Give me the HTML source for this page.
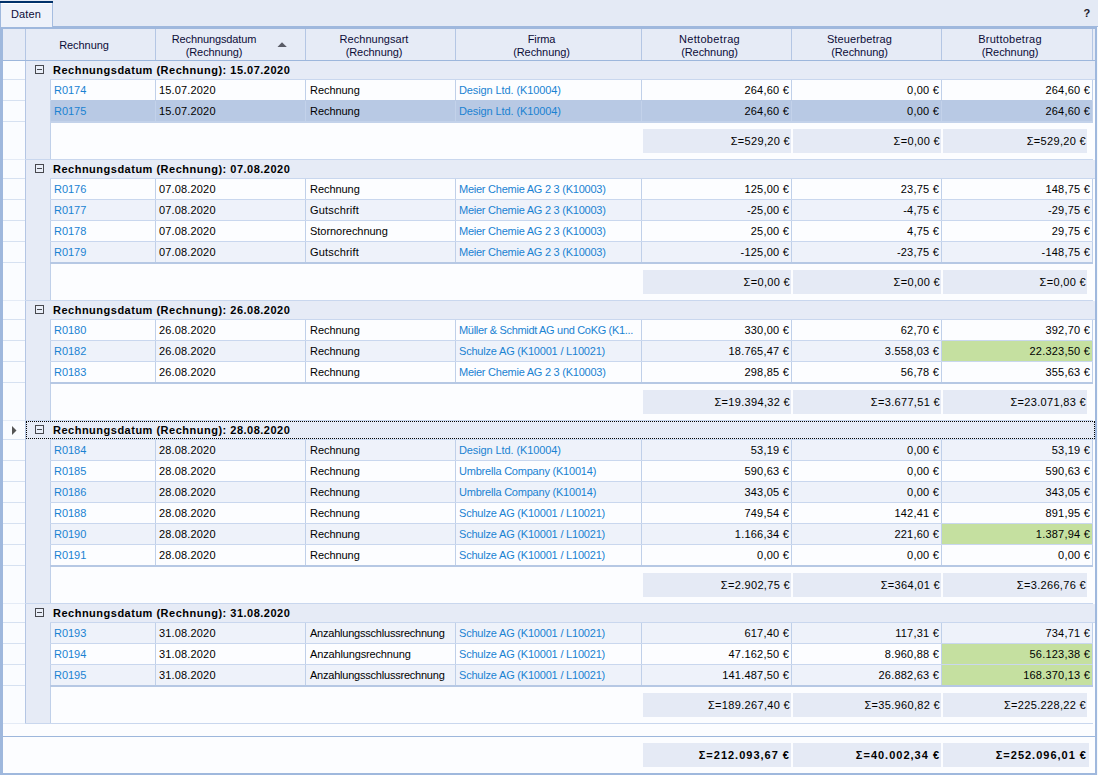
<!DOCTYPE html>
<html><head><meta charset="utf-8"><style>
html,body{margin:0;padding:0;width:1098px;height:775px;overflow:hidden;background:#f5f8fc;}
body{position:relative;font-family:"Liberation Sans", sans-serif;font-size:11px;}
div{position:absolute;box-sizing:content-box;}
.t,.n,.d,.s,.b,.tot,.tab{white-space:nowrap;line-height:20px;height:20px;}
.t{letter-spacing:-0.25px;}
.n{letter-spacing:0.22px;}
.d{letter-spacing:0.16px;}
.s{letter-spacing:0.33px;}
.b{letter-spacing:0.5px;}
.tot{letter-spacing:1.0px;}
</style></head><body>
<div style="left:0px;top:0px;width:1098px;height:27px;background:#e4eaf5;"></div>
<div style="left:0px;top:1px;width:53px;height:2px;background:#00316a;"></div>
<div style="left:0px;top:3px;width:53px;height:24px;background:#eef2fa;"></div>
<div style="left:0px;top:3px;width:1px;height:24px;background:#9fb8dd;"></div>
<div style="left:52px;top:3px;width:1px;height:24px;background:#a5bde0;"></div>
<div style="left:1px;top:3px;width:51px;height:1px;background:#ffffff;"></div>
<div class="tab" style="top:4px;color:#0c0c38;left:11px;letter-spacing:0.110px;">Daten</div>
<div class="t" style="top:3px;color:#1a1a2a;right:8px;text-align:right;font-weight:bold;">?</div>
<div style="left:53px;top:26px;width:1045px;height:1px;background:#9fb8dd;"></div>
<div style="left:0px;top:27px;width:1097px;height:2px;background:#9fb8dd;"></div>
<div style="left:0px;top:27px;width:3px;height:748px;background:#9fb8dd;"></div>
<div style="left:1095px;top:27px;width:2px;height:748px;background:#9fb8dd;"></div>
<div style="left:0px;top:773px;width:1097px;height:2px;background:#9fb8dd;"></div>
<div style="left:3px;top:29px;width:1092px;height:744px;background:#fcfdff;"></div>
<div style="left:3px;top:29px;width:1092px;height:31px;background:#e6ebf6;"></div>
<div style="left:3px;top:60px;width:1092px;height:1px;background:#9db7dc;"></div>
<div style="left:25px;top:29px;width:1px;height:31px;background:#b4c6e4;"></div>
<div style="left:155px;top:29px;width:1px;height:31px;background:#b4c6e4;"></div>
<div style="left:305px;top:29px;width:1px;height:31px;background:#b4c6e4;"></div>
<div style="left:455px;top:29px;width:1px;height:31px;background:#b4c6e4;"></div>
<div style="left:641px;top:29px;width:1px;height:31px;background:#b4c6e4;"></div>
<div style="left:791px;top:29px;width:1px;height:31px;background:#b4c6e4;"></div>
<div style="left:941px;top:29px;width:1px;height:31px;background:#b4c6e4;"></div>
<div style="left:1092px;top:29px;width:1px;height:31px;background:#b4c6e4;"></div>
<div class="t" style="top:35px;color:#0c0c38;left:-66px;width:300px;text-align:center;letter-spacing:-0.051px;">Rechnung</div>
<div class="t" style="top:29px;color:#0c0c38;left:64px;width:300px;text-align:center;letter-spacing:-0.110px;">Rechnungsdatum</div>
<div class="t" style="top:42px;color:#0c0c38;left:64px;width:300px;text-align:center;letter-spacing:-0.076px;">(Rechnung)</div>
<div class="t" style="top:29px;color:#0c0c38;left:224px;width:300px;text-align:center;letter-spacing:0.027px;">Rechnungsart</div>
<div class="t" style="top:42px;color:#0c0c38;left:224px;width:300px;text-align:center;letter-spacing:-0.076px;">(Rechnung)</div>
<div class="t" style="top:29px;color:#0c0c38;left:391.5px;width:300px;text-align:center;letter-spacing:-0.077px;">Firma</div>
<div class="t" style="top:42px;color:#0c0c38;left:391.5px;width:300px;text-align:center;letter-spacing:-0.076px;">(Rechnung)</div>
<div class="t" style="top:29px;color:#0c0c38;left:559.5px;width:300px;text-align:center;letter-spacing:0.332px;">Nettobetrag</div>
<div class="t" style="top:42px;color:#0c0c38;left:559.5px;width:300px;text-align:center;letter-spacing:-0.076px;">(Rechnung)</div>
<div class="t" style="top:29px;color:#0c0c38;left:709.5px;width:300px;text-align:center;letter-spacing:0.136px;">Steuerbetrag</div>
<div class="t" style="top:42px;color:#0c0c38;left:709.5px;width:300px;text-align:center;letter-spacing:-0.076px;">(Rechnung)</div>
<div class="t" style="top:29px;color:#0c0c38;left:860px;width:300px;text-align:center;letter-spacing:0.259px;">Bruttobetrag</div>
<div class="t" style="top:42px;color:#0c0c38;left:860px;width:300px;text-align:center;letter-spacing:-0.076px;">(Rechnung)</div>
<svg style="position:absolute;left:277px;top:42px" width="11" height="6"><path d="M0.5 5 L5 0.3 L9.8 5 Z" fill="#595b66"/></svg>
<div style="left:3px;top:61px;width:22px;height:662px;background:#fafcff;"></div>
<div style="left:25px;top:61px;width:1px;height:663px;background:#b4c6e4;"></div>
<div style="left:26px;top:61px;width:1069px;height:18px;background:#e6ebf6;"></div>
<div style="left:35px;top:65px;width:7px;height:7px;border:1px solid #47484e;background:#e9eef8"></div>
<div style="left:37px;top:69px;width:5px;height:1px;background:#47484e;"></div>
<div class="b" style="top:60px;color:#000000;left:53px;font-weight:bold;">Rechnungsdatum (Rechnung): 15.07.2020</div>
<div style="left:3px;top:79px;width:22px;height:1px;background:#d6e1f1;"></div>
<div style="left:26px;top:79px;width:24px;height:1px;background:#e6ebf6;"></div>
<div style="left:50px;top:79px;width:1045px;height:1px;background:#c9d7ee;"></div>
<div style="left:26px;top:80px;width:24px;height:80px;background:#e6ebf6;"></div>
<div style="left:50px;top:80px;width:1px;height:80px;background:#c0d0e9;"></div>
<div style="left:51px;top:80px;width:1041px;height:20px;background:#fcfdff;"></div>
<div style="left:155px;top:80px;width:1px;height:20px;background:#c0d0e9;"></div>
<div style="left:305px;top:80px;width:1px;height:20px;background:#c0d0e9;"></div>
<div style="left:455px;top:80px;width:1px;height:20px;background:#c0d0e9;"></div>
<div style="left:641px;top:80px;width:1px;height:20px;background:#c0d0e9;"></div>
<div style="left:791px;top:80px;width:1px;height:20px;background:#c0d0e9;"></div>
<div style="left:941px;top:80px;width:1px;height:20px;background:#c0d0e9;"></div>
<div style="left:1092px;top:80px;width:1px;height:20px;background:#c0d0e9;"></div>
<div style="left:3px;top:100px;width:22px;height:1px;background:#d6e1f1;"></div>
<div style="left:50px;top:100px;width:1043px;height:1px;background:#c9d7ee;"></div>
<div class="t" style="top:80px;color:#1a82d2;left:54px;letter-spacing:-0.030px;">R0174</div>
<div class="d" style="top:80px;color:#000000;left:159px;">15.07.2020</div>
<div class="t" style="top:80px;color:#000000;left:310px;letter-spacing:-0.051px;">Rechnung</div>
<div class="t" style="top:80px;color:#1a82d2;left:459px;letter-spacing:-0.103px;">Design Ltd. (K10004)</div>
<div class="n" style="top:80px;color:#000000;right:309px;text-align:right;">264,60 €</div>
<div class="n" style="top:80px;color:#000000;right:159px;text-align:right;">0,00 €</div>
<div class="n" style="top:80px;color:#000000;right:8px;text-align:right;">264,60 €</div>
<div style="left:51px;top:101px;width:1041px;height:20px;background:#b8c9e4;"></div>
<div style="left:51px;top:100px;width:1041px;height:1px;background:#b8c9e4;"></div>
<div style="left:155px;top:101px;width:1px;height:20px;background:#c3d2ea;"></div>
<div style="left:305px;top:101px;width:1px;height:20px;background:#c3d2ea;"></div>
<div style="left:455px;top:101px;width:1px;height:20px;background:#c3d2ea;"></div>
<div style="left:641px;top:101px;width:1px;height:20px;background:#c3d2ea;"></div>
<div style="left:791px;top:101px;width:1px;height:20px;background:#c3d2ea;"></div>
<div style="left:941px;top:101px;width:1px;height:20px;background:#c3d2ea;"></div>
<div style="left:1092px;top:101px;width:1px;height:20px;background:#c3d2ea;"></div>
<div style="left:3px;top:121px;width:22px;height:1px;background:#d6e1f1;"></div>
<div style="left:50px;top:121px;width:1043px;height:2px;background:#c3d2ea;"></div>
<div class="t" style="top:101px;color:#1a82d2;left:54px;letter-spacing:-0.030px;">R0175</div>
<div class="d" style="top:101px;color:#000000;left:159px;">15.07.2020</div>
<div class="t" style="top:101px;color:#000000;left:310px;letter-spacing:-0.051px;">Rechnung</div>
<div class="t" style="top:101px;color:#1a82d2;left:459px;letter-spacing:-0.103px;">Design Ltd. (K10004)</div>
<div class="n" style="top:101px;color:#000000;right:309px;text-align:right;">264,60 €</div>
<div class="n" style="top:101px;color:#000000;right:159px;text-align:right;">0,00 €</div>
<div class="n" style="top:101px;color:#000000;right:8px;text-align:right;">264,60 €</div>
<div style="left:51px;top:123px;width:1044px;height:36px;background:#fcfdff;"></div>
<div style="left:643px;top:129px;width:148px;height:24px;background:#e5eaf5;"></div>
<div style="left:793px;top:129px;width:148px;height:24px;background:#e5eaf5;"></div>
<div style="left:943px;top:129px;width:144px;height:24px;background:#e5eaf5;"></div>
<div class="s" style="top:131px;color:#000000;right:308px;text-align:right;">Σ=529,20 €</div>
<div class="s" style="top:131px;color:#000000;right:158px;text-align:right;">Σ=0,00 €</div>
<div class="s" style="top:131px;color:#000000;right:12px;text-align:right;">Σ=529,20 €</div>
<div style="left:3px;top:159px;width:22px;height:1px;background:#e4ebf6;"></div>
<div style="left:25px;top:159px;width:1068px;height:1px;background:#c9d7ee;"></div>
<div style="left:26px;top:160px;width:1069px;height:18px;background:#e6ebf6;"></div>
<div style="left:35px;top:164px;width:7px;height:7px;border:1px solid #47484e;background:#e9eef8"></div>
<div style="left:37px;top:168px;width:5px;height:1px;background:#47484e;"></div>
<div class="b" style="top:159px;color:#000000;left:53px;font-weight:bold;">Rechnungsdatum (Rechnung): 07.08.2020</div>
<div style="left:3px;top:178px;width:22px;height:1px;background:#d6e1f1;"></div>
<div style="left:26px;top:178px;width:24px;height:1px;background:#e6ebf6;"></div>
<div style="left:50px;top:178px;width:1045px;height:1px;background:#c9d7ee;"></div>
<div style="left:26px;top:179px;width:24px;height:122px;background:#e6ebf6;"></div>
<div style="left:50px;top:179px;width:1px;height:122px;background:#c0d0e9;"></div>
<div style="left:51px;top:179px;width:1041px;height:20px;background:#fcfdff;"></div>
<div style="left:155px;top:179px;width:1px;height:20px;background:#c0d0e9;"></div>
<div style="left:305px;top:179px;width:1px;height:20px;background:#c0d0e9;"></div>
<div style="left:455px;top:179px;width:1px;height:20px;background:#c0d0e9;"></div>
<div style="left:641px;top:179px;width:1px;height:20px;background:#c0d0e9;"></div>
<div style="left:791px;top:179px;width:1px;height:20px;background:#c0d0e9;"></div>
<div style="left:941px;top:179px;width:1px;height:20px;background:#c0d0e9;"></div>
<div style="left:1092px;top:179px;width:1px;height:20px;background:#c0d0e9;"></div>
<div style="left:3px;top:199px;width:22px;height:1px;background:#d6e1f1;"></div>
<div style="left:50px;top:199px;width:1043px;height:1px;background:#c9d7ee;"></div>
<div class="t" style="top:179px;color:#1a82d2;left:54px;letter-spacing:-0.030px;">R0176</div>
<div class="d" style="top:179px;color:#000000;left:159px;">07.08.2020</div>
<div class="t" style="top:179px;color:#000000;left:310px;letter-spacing:-0.051px;">Rechnung</div>
<div class="t" style="top:179px;color:#1a82d2;left:459px;letter-spacing:-0.247px;">Meier Chemie AG 2 3 (K10003)</div>
<div class="n" style="top:179px;color:#000000;right:309px;text-align:right;">125,00 €</div>
<div class="n" style="top:179px;color:#000000;right:159px;text-align:right;">23,75 €</div>
<div class="n" style="top:179px;color:#000000;right:8px;text-align:right;">148,75 €</div>
<div style="left:51px;top:200px;width:1041px;height:20px;background:#eef2fa;"></div>
<div style="left:155px;top:200px;width:1px;height:20px;background:#c0d0e9;"></div>
<div style="left:305px;top:200px;width:1px;height:20px;background:#c0d0e9;"></div>
<div style="left:455px;top:200px;width:1px;height:20px;background:#c0d0e9;"></div>
<div style="left:641px;top:200px;width:1px;height:20px;background:#c0d0e9;"></div>
<div style="left:791px;top:200px;width:1px;height:20px;background:#c0d0e9;"></div>
<div style="left:941px;top:200px;width:1px;height:20px;background:#c0d0e9;"></div>
<div style="left:1092px;top:200px;width:1px;height:20px;background:#c0d0e9;"></div>
<div style="left:3px;top:220px;width:22px;height:1px;background:#d6e1f1;"></div>
<div style="left:50px;top:220px;width:1043px;height:1px;background:#c9d7ee;"></div>
<div class="t" style="top:200px;color:#1a82d2;left:54px;letter-spacing:-0.030px;">R0177</div>
<div class="d" style="top:200px;color:#000000;left:159px;">07.08.2020</div>
<div class="t" style="top:200px;color:#000000;left:310px;letter-spacing:0.191px;">Gutschrift</div>
<div class="t" style="top:200px;color:#1a82d2;left:459px;letter-spacing:-0.247px;">Meier Chemie AG 2 3 (K10003)</div>
<div class="n" style="top:200px;color:#000000;right:309px;text-align:right;">-25,00 €</div>
<div class="n" style="top:200px;color:#000000;right:159px;text-align:right;">-4,75 €</div>
<div class="n" style="top:200px;color:#000000;right:8px;text-align:right;">-29,75 €</div>
<div style="left:51px;top:221px;width:1041px;height:20px;background:#fcfdff;"></div>
<div style="left:155px;top:221px;width:1px;height:20px;background:#c0d0e9;"></div>
<div style="left:305px;top:221px;width:1px;height:20px;background:#c0d0e9;"></div>
<div style="left:455px;top:221px;width:1px;height:20px;background:#c0d0e9;"></div>
<div style="left:641px;top:221px;width:1px;height:20px;background:#c0d0e9;"></div>
<div style="left:791px;top:221px;width:1px;height:20px;background:#c0d0e9;"></div>
<div style="left:941px;top:221px;width:1px;height:20px;background:#c0d0e9;"></div>
<div style="left:1092px;top:221px;width:1px;height:20px;background:#c0d0e9;"></div>
<div style="left:3px;top:241px;width:22px;height:1px;background:#d6e1f1;"></div>
<div style="left:50px;top:241px;width:1043px;height:1px;background:#c9d7ee;"></div>
<div class="t" style="top:221px;color:#1a82d2;left:54px;letter-spacing:-0.030px;">R0178</div>
<div class="d" style="top:221px;color:#000000;left:159px;">07.08.2020</div>
<div class="t" style="top:221px;color:#000000;left:310px;letter-spacing:-0.037px;">Stornorechnung</div>
<div class="t" style="top:221px;color:#1a82d2;left:459px;letter-spacing:-0.247px;">Meier Chemie AG 2 3 (K10003)</div>
<div class="n" style="top:221px;color:#000000;right:309px;text-align:right;">25,00 €</div>
<div class="n" style="top:221px;color:#000000;right:159px;text-align:right;">4,75 €</div>
<div class="n" style="top:221px;color:#000000;right:8px;text-align:right;">29,75 €</div>
<div style="left:51px;top:242px;width:1041px;height:20px;background:#eef2fa;"></div>
<div style="left:155px;top:242px;width:1px;height:20px;background:#c0d0e9;"></div>
<div style="left:305px;top:242px;width:1px;height:20px;background:#c0d0e9;"></div>
<div style="left:455px;top:242px;width:1px;height:20px;background:#c0d0e9;"></div>
<div style="left:641px;top:242px;width:1px;height:20px;background:#c0d0e9;"></div>
<div style="left:791px;top:242px;width:1px;height:20px;background:#c0d0e9;"></div>
<div style="left:941px;top:242px;width:1px;height:20px;background:#c0d0e9;"></div>
<div style="left:1092px;top:242px;width:1px;height:20px;background:#c0d0e9;"></div>
<div style="left:3px;top:262px;width:22px;height:1px;background:#d6e1f1;"></div>
<div style="left:50px;top:262px;width:1043px;height:2px;background:#b6c8e4;"></div>
<div class="t" style="top:242px;color:#1a82d2;left:54px;letter-spacing:-0.030px;">R0179</div>
<div class="d" style="top:242px;color:#000000;left:159px;">07.08.2020</div>
<div class="t" style="top:242px;color:#000000;left:310px;letter-spacing:0.191px;">Gutschrift</div>
<div class="t" style="top:242px;color:#1a82d2;left:459px;letter-spacing:-0.247px;">Meier Chemie AG 2 3 (K10003)</div>
<div class="n" style="top:242px;color:#000000;right:309px;text-align:right;">-125,00 €</div>
<div class="n" style="top:242px;color:#000000;right:159px;text-align:right;">-23,75 €</div>
<div class="n" style="top:242px;color:#000000;right:8px;text-align:right;">-148,75 €</div>
<div style="left:51px;top:264px;width:1044px;height:36px;background:#fcfdff;"></div>
<div style="left:643px;top:270px;width:148px;height:24px;background:#e5eaf5;"></div>
<div style="left:793px;top:270px;width:148px;height:24px;background:#e5eaf5;"></div>
<div style="left:943px;top:270px;width:144px;height:24px;background:#e5eaf5;"></div>
<div class="s" style="top:272px;color:#000000;right:308px;text-align:right;">Σ=0,00 €</div>
<div class="s" style="top:272px;color:#000000;right:158px;text-align:right;">Σ=0,00 €</div>
<div class="s" style="top:272px;color:#000000;right:12px;text-align:right;">Σ=0,00 €</div>
<div style="left:3px;top:300px;width:22px;height:1px;background:#e4ebf6;"></div>
<div style="left:25px;top:300px;width:1068px;height:1px;background:#c9d7ee;"></div>
<div style="left:26px;top:301px;width:1069px;height:18px;background:#e6ebf6;"></div>
<div style="left:35px;top:305px;width:7px;height:7px;border:1px solid #47484e;background:#e9eef8"></div>
<div style="left:37px;top:309px;width:5px;height:1px;background:#47484e;"></div>
<div class="b" style="top:300px;color:#000000;left:53px;font-weight:bold;">Rechnungsdatum (Rechnung): 26.08.2020</div>
<div style="left:3px;top:319px;width:22px;height:1px;background:#d6e1f1;"></div>
<div style="left:26px;top:319px;width:24px;height:1px;background:#e6ebf6;"></div>
<div style="left:50px;top:319px;width:1045px;height:1px;background:#c9d7ee;"></div>
<div style="left:26px;top:320px;width:24px;height:101px;background:#e6ebf6;"></div>
<div style="left:50px;top:320px;width:1px;height:101px;background:#c0d0e9;"></div>
<div style="left:51px;top:320px;width:1041px;height:20px;background:#fcfdff;"></div>
<div style="left:155px;top:320px;width:1px;height:20px;background:#c0d0e9;"></div>
<div style="left:305px;top:320px;width:1px;height:20px;background:#c0d0e9;"></div>
<div style="left:455px;top:320px;width:1px;height:20px;background:#c0d0e9;"></div>
<div style="left:641px;top:320px;width:1px;height:20px;background:#c0d0e9;"></div>
<div style="left:791px;top:320px;width:1px;height:20px;background:#c0d0e9;"></div>
<div style="left:941px;top:320px;width:1px;height:20px;background:#c0d0e9;"></div>
<div style="left:1092px;top:320px;width:1px;height:20px;background:#c0d0e9;"></div>
<div style="left:3px;top:340px;width:22px;height:1px;background:#d6e1f1;"></div>
<div style="left:50px;top:340px;width:1043px;height:1px;background:#c9d7ee;"></div>
<div class="t" style="top:320px;color:#1a82d2;left:54px;letter-spacing:-0.030px;">R0180</div>
<div class="d" style="top:320px;color:#000000;left:159px;">26.08.2020</div>
<div class="t" style="top:320px;color:#000000;left:310px;letter-spacing:-0.051px;">Rechnung</div>
<div class="t" style="top:320px;color:#1a82d2;left:459px;letter-spacing:-0.322px;">Müller &amp; Schmidt AG und CoKG (K1...</div>
<div class="n" style="top:320px;color:#000000;right:309px;text-align:right;">330,00 €</div>
<div class="n" style="top:320px;color:#000000;right:159px;text-align:right;">62,70 €</div>
<div class="n" style="top:320px;color:#000000;right:8px;text-align:right;">392,70 €</div>
<div style="left:51px;top:341px;width:1041px;height:20px;background:#eef2fa;"></div>
<div style="left:942px;top:341px;width:150px;height:20px;background:#c5e0a0;"></div>
<div style="left:155px;top:341px;width:1px;height:20px;background:#c0d0e9;"></div>
<div style="left:305px;top:341px;width:1px;height:20px;background:#c0d0e9;"></div>
<div style="left:455px;top:341px;width:1px;height:20px;background:#c0d0e9;"></div>
<div style="left:641px;top:341px;width:1px;height:20px;background:#c0d0e9;"></div>
<div style="left:791px;top:341px;width:1px;height:20px;background:#c0d0e9;"></div>
<div style="left:941px;top:341px;width:1px;height:20px;background:#c0d0e9;"></div>
<div style="left:1092px;top:341px;width:1px;height:20px;background:#c0d0e9;"></div>
<div style="left:3px;top:361px;width:22px;height:1px;background:#d6e1f1;"></div>
<div style="left:50px;top:361px;width:1043px;height:1px;background:#c9d7ee;"></div>
<div class="t" style="top:341px;color:#1a82d2;left:54px;letter-spacing:-0.030px;">R0182</div>
<div class="d" style="top:341px;color:#000000;left:159px;">26.08.2020</div>
<div class="t" style="top:341px;color:#000000;left:310px;letter-spacing:-0.051px;">Rechnung</div>
<div class="t" style="top:341px;color:#1a82d2;left:459px;letter-spacing:-0.199px;">Schulze AG (K10001 / L10021)</div>
<div class="n" style="top:341px;color:#000000;right:309px;text-align:right;">18.765,47 €</div>
<div class="n" style="top:341px;color:#000000;right:159px;text-align:right;">3.558,03 €</div>
<div class="n" style="top:341px;color:#000000;right:8px;text-align:right;">22.323,50 €</div>
<div style="left:51px;top:362px;width:1041px;height:20px;background:#fcfdff;"></div>
<div style="left:155px;top:362px;width:1px;height:20px;background:#c0d0e9;"></div>
<div style="left:305px;top:362px;width:1px;height:20px;background:#c0d0e9;"></div>
<div style="left:455px;top:362px;width:1px;height:20px;background:#c0d0e9;"></div>
<div style="left:641px;top:362px;width:1px;height:20px;background:#c0d0e9;"></div>
<div style="left:791px;top:362px;width:1px;height:20px;background:#c0d0e9;"></div>
<div style="left:941px;top:362px;width:1px;height:20px;background:#c0d0e9;"></div>
<div style="left:1092px;top:362px;width:1px;height:20px;background:#c0d0e9;"></div>
<div style="left:3px;top:382px;width:22px;height:1px;background:#d6e1f1;"></div>
<div style="left:50px;top:382px;width:1043px;height:2px;background:#b6c8e4;"></div>
<div class="t" style="top:362px;color:#1a82d2;left:54px;letter-spacing:-0.030px;">R0183</div>
<div class="d" style="top:362px;color:#000000;left:159px;">26.08.2020</div>
<div class="t" style="top:362px;color:#000000;left:310px;letter-spacing:-0.051px;">Rechnung</div>
<div class="t" style="top:362px;color:#1a82d2;left:459px;letter-spacing:-0.247px;">Meier Chemie AG 2 3 (K10003)</div>
<div class="n" style="top:362px;color:#000000;right:309px;text-align:right;">298,85 €</div>
<div class="n" style="top:362px;color:#000000;right:159px;text-align:right;">56,78 €</div>
<div class="n" style="top:362px;color:#000000;right:8px;text-align:right;">355,63 €</div>
<div style="left:51px;top:384px;width:1044px;height:36px;background:#fcfdff;"></div>
<div style="left:643px;top:390px;width:148px;height:24px;background:#e5eaf5;"></div>
<div style="left:793px;top:390px;width:148px;height:24px;background:#e5eaf5;"></div>
<div style="left:943px;top:390px;width:144px;height:24px;background:#e5eaf5;"></div>
<div class="s" style="top:392px;color:#000000;right:308px;text-align:right;">Σ=19.394,32 €</div>
<div class="s" style="top:392px;color:#000000;right:158px;text-align:right;">Σ=3.677,51 €</div>
<div class="s" style="top:392px;color:#000000;right:12px;text-align:right;">Σ=23.071,83 €</div>
<div style="left:3px;top:420px;width:22px;height:1px;background:#e4ebf6;"></div>
<div style="left:25px;top:420px;width:1068px;height:1px;background:#c9d7ee;"></div>
<div style="left:26px;top:421px;width:1069px;height:18px;background:#e6ebf6;"></div>
<div style="left:35px;top:425px;width:7px;height:7px;border:1px solid #47484e;background:#e9eef8"></div>
<div style="left:37px;top:429px;width:5px;height:1px;background:#47484e;"></div>
<div class="b" style="top:420px;color:#000000;left:53px;font-weight:bold;">Rechnungsdatum (Rechnung): 28.08.2020</div>
<div style="left:26px;top:421px;width:1067px;height:16px;border:1px dotted #000"></div>
<svg style="position:absolute;left:12px;top:426px" width="5" height="9"><path d="M0 0 L4.5 4.5 L0 9 Z" fill="#555"/></svg>
<div style="left:3px;top:439px;width:22px;height:1px;background:#d6e1f1;"></div>
<div style="left:26px;top:439px;width:24px;height:1px;background:#e6ebf6;"></div>
<div style="left:50px;top:439px;width:1045px;height:1px;background:#c9d7ee;"></div>
<div style="left:26px;top:440px;width:24px;height:164px;background:#e6ebf6;"></div>
<div style="left:50px;top:440px;width:1px;height:164px;background:#c0d0e9;"></div>
<div style="left:51px;top:440px;width:1041px;height:20px;background:#eef2fa;"></div>
<div style="left:155px;top:440px;width:1px;height:20px;background:#c0d0e9;"></div>
<div style="left:305px;top:440px;width:1px;height:20px;background:#c0d0e9;"></div>
<div style="left:455px;top:440px;width:1px;height:20px;background:#c0d0e9;"></div>
<div style="left:641px;top:440px;width:1px;height:20px;background:#c0d0e9;"></div>
<div style="left:791px;top:440px;width:1px;height:20px;background:#c0d0e9;"></div>
<div style="left:941px;top:440px;width:1px;height:20px;background:#c0d0e9;"></div>
<div style="left:1092px;top:440px;width:1px;height:20px;background:#c0d0e9;"></div>
<div style="left:3px;top:460px;width:22px;height:1px;background:#d6e1f1;"></div>
<div style="left:50px;top:460px;width:1043px;height:1px;background:#c9d7ee;"></div>
<div class="t" style="top:440px;color:#1a82d2;left:54px;letter-spacing:-0.030px;">R0184</div>
<div class="d" style="top:440px;color:#000000;left:159px;">28.08.2020</div>
<div class="t" style="top:440px;color:#000000;left:310px;letter-spacing:-0.051px;">Rechnung</div>
<div class="t" style="top:440px;color:#1a82d2;left:459px;letter-spacing:-0.103px;">Design Ltd. (K10004)</div>
<div class="n" style="top:440px;color:#000000;right:309px;text-align:right;">53,19 €</div>
<div class="n" style="top:440px;color:#000000;right:159px;text-align:right;">0,00 €</div>
<div class="n" style="top:440px;color:#000000;right:8px;text-align:right;">53,19 €</div>
<div style="left:51px;top:461px;width:1041px;height:20px;background:#fcfdff;"></div>
<div style="left:155px;top:461px;width:1px;height:20px;background:#c0d0e9;"></div>
<div style="left:305px;top:461px;width:1px;height:20px;background:#c0d0e9;"></div>
<div style="left:455px;top:461px;width:1px;height:20px;background:#c0d0e9;"></div>
<div style="left:641px;top:461px;width:1px;height:20px;background:#c0d0e9;"></div>
<div style="left:791px;top:461px;width:1px;height:20px;background:#c0d0e9;"></div>
<div style="left:941px;top:461px;width:1px;height:20px;background:#c0d0e9;"></div>
<div style="left:1092px;top:461px;width:1px;height:20px;background:#c0d0e9;"></div>
<div style="left:3px;top:481px;width:22px;height:1px;background:#d6e1f1;"></div>
<div style="left:50px;top:481px;width:1043px;height:1px;background:#c9d7ee;"></div>
<div class="t" style="top:461px;color:#1a82d2;left:54px;letter-spacing:-0.030px;">R0185</div>
<div class="d" style="top:461px;color:#000000;left:159px;">28.08.2020</div>
<div class="t" style="top:461px;color:#000000;left:310px;letter-spacing:-0.051px;">Rechnung</div>
<div class="t" style="top:461px;color:#1a82d2;left:459px;letter-spacing:-0.215px;">Umbrella Company (K10014)</div>
<div class="n" style="top:461px;color:#000000;right:309px;text-align:right;">590,63 €</div>
<div class="n" style="top:461px;color:#000000;right:159px;text-align:right;">0,00 €</div>
<div class="n" style="top:461px;color:#000000;right:8px;text-align:right;">590,63 €</div>
<div style="left:51px;top:482px;width:1041px;height:20px;background:#eef2fa;"></div>
<div style="left:155px;top:482px;width:1px;height:20px;background:#c0d0e9;"></div>
<div style="left:305px;top:482px;width:1px;height:20px;background:#c0d0e9;"></div>
<div style="left:455px;top:482px;width:1px;height:20px;background:#c0d0e9;"></div>
<div style="left:641px;top:482px;width:1px;height:20px;background:#c0d0e9;"></div>
<div style="left:791px;top:482px;width:1px;height:20px;background:#c0d0e9;"></div>
<div style="left:941px;top:482px;width:1px;height:20px;background:#c0d0e9;"></div>
<div style="left:1092px;top:482px;width:1px;height:20px;background:#c0d0e9;"></div>
<div style="left:3px;top:502px;width:22px;height:1px;background:#d6e1f1;"></div>
<div style="left:50px;top:502px;width:1043px;height:1px;background:#c9d7ee;"></div>
<div class="t" style="top:482px;color:#1a82d2;left:54px;letter-spacing:-0.030px;">R0186</div>
<div class="d" style="top:482px;color:#000000;left:159px;">28.08.2020</div>
<div class="t" style="top:482px;color:#000000;left:310px;letter-spacing:-0.051px;">Rechnung</div>
<div class="t" style="top:482px;color:#1a82d2;left:459px;letter-spacing:-0.215px;">Umbrella Company (K10014)</div>
<div class="n" style="top:482px;color:#000000;right:309px;text-align:right;">343,05 €</div>
<div class="n" style="top:482px;color:#000000;right:159px;text-align:right;">0,00 €</div>
<div class="n" style="top:482px;color:#000000;right:8px;text-align:right;">343,05 €</div>
<div style="left:51px;top:503px;width:1041px;height:20px;background:#fcfdff;"></div>
<div style="left:155px;top:503px;width:1px;height:20px;background:#c0d0e9;"></div>
<div style="left:305px;top:503px;width:1px;height:20px;background:#c0d0e9;"></div>
<div style="left:455px;top:503px;width:1px;height:20px;background:#c0d0e9;"></div>
<div style="left:641px;top:503px;width:1px;height:20px;background:#c0d0e9;"></div>
<div style="left:791px;top:503px;width:1px;height:20px;background:#c0d0e9;"></div>
<div style="left:941px;top:503px;width:1px;height:20px;background:#c0d0e9;"></div>
<div style="left:1092px;top:503px;width:1px;height:20px;background:#c0d0e9;"></div>
<div style="left:3px;top:523px;width:22px;height:1px;background:#d6e1f1;"></div>
<div style="left:50px;top:523px;width:1043px;height:1px;background:#c9d7ee;"></div>
<div class="t" style="top:503px;color:#1a82d2;left:54px;letter-spacing:-0.030px;">R0188</div>
<div class="d" style="top:503px;color:#000000;left:159px;">28.08.2020</div>
<div class="t" style="top:503px;color:#000000;left:310px;letter-spacing:-0.051px;">Rechnung</div>
<div class="t" style="top:503px;color:#1a82d2;left:459px;letter-spacing:-0.199px;">Schulze AG (K10001 / L10021)</div>
<div class="n" style="top:503px;color:#000000;right:309px;text-align:right;">749,54 €</div>
<div class="n" style="top:503px;color:#000000;right:159px;text-align:right;">142,41 €</div>
<div class="n" style="top:503px;color:#000000;right:8px;text-align:right;">891,95 €</div>
<div style="left:51px;top:524px;width:1041px;height:20px;background:#eef2fa;"></div>
<div style="left:942px;top:524px;width:150px;height:20px;background:#c5e0a0;"></div>
<div style="left:155px;top:524px;width:1px;height:20px;background:#c0d0e9;"></div>
<div style="left:305px;top:524px;width:1px;height:20px;background:#c0d0e9;"></div>
<div style="left:455px;top:524px;width:1px;height:20px;background:#c0d0e9;"></div>
<div style="left:641px;top:524px;width:1px;height:20px;background:#c0d0e9;"></div>
<div style="left:791px;top:524px;width:1px;height:20px;background:#c0d0e9;"></div>
<div style="left:941px;top:524px;width:1px;height:20px;background:#c0d0e9;"></div>
<div style="left:1092px;top:524px;width:1px;height:20px;background:#c0d0e9;"></div>
<div style="left:3px;top:544px;width:22px;height:1px;background:#d6e1f1;"></div>
<div style="left:50px;top:544px;width:1043px;height:1px;background:#c9d7ee;"></div>
<div class="t" style="top:524px;color:#1a82d2;left:54px;letter-spacing:-0.030px;">R0190</div>
<div class="d" style="top:524px;color:#000000;left:159px;">28.08.2020</div>
<div class="t" style="top:524px;color:#000000;left:310px;letter-spacing:-0.051px;">Rechnung</div>
<div class="t" style="top:524px;color:#1a82d2;left:459px;letter-spacing:-0.199px;">Schulze AG (K10001 / L10021)</div>
<div class="n" style="top:524px;color:#000000;right:309px;text-align:right;">1.166,34 €</div>
<div class="n" style="top:524px;color:#000000;right:159px;text-align:right;">221,60 €</div>
<div class="n" style="top:524px;color:#000000;right:8px;text-align:right;">1.387,94 €</div>
<div style="left:51px;top:545px;width:1041px;height:20px;background:#fcfdff;"></div>
<div style="left:155px;top:545px;width:1px;height:20px;background:#c0d0e9;"></div>
<div style="left:305px;top:545px;width:1px;height:20px;background:#c0d0e9;"></div>
<div style="left:455px;top:545px;width:1px;height:20px;background:#c0d0e9;"></div>
<div style="left:641px;top:545px;width:1px;height:20px;background:#c0d0e9;"></div>
<div style="left:791px;top:545px;width:1px;height:20px;background:#c0d0e9;"></div>
<div style="left:941px;top:545px;width:1px;height:20px;background:#c0d0e9;"></div>
<div style="left:1092px;top:545px;width:1px;height:20px;background:#c0d0e9;"></div>
<div style="left:3px;top:565px;width:22px;height:1px;background:#d6e1f1;"></div>
<div style="left:50px;top:565px;width:1043px;height:2px;background:#b6c8e4;"></div>
<div class="t" style="top:545px;color:#1a82d2;left:54px;letter-spacing:-0.030px;">R0191</div>
<div class="d" style="top:545px;color:#000000;left:159px;">28.08.2020</div>
<div class="t" style="top:545px;color:#000000;left:310px;letter-spacing:-0.051px;">Rechnung</div>
<div class="t" style="top:545px;color:#1a82d2;left:459px;letter-spacing:-0.199px;">Schulze AG (K10001 / L10021)</div>
<div class="n" style="top:545px;color:#000000;right:309px;text-align:right;">0,00 €</div>
<div class="n" style="top:545px;color:#000000;right:159px;text-align:right;">0,00 €</div>
<div class="n" style="top:545px;color:#000000;right:8px;text-align:right;">0,00 €</div>
<div style="left:51px;top:567px;width:1044px;height:36px;background:#fcfdff;"></div>
<div style="left:643px;top:573px;width:148px;height:24px;background:#e5eaf5;"></div>
<div style="left:793px;top:573px;width:148px;height:24px;background:#e5eaf5;"></div>
<div style="left:943px;top:573px;width:144px;height:24px;background:#e5eaf5;"></div>
<div class="s" style="top:575px;color:#000000;right:308px;text-align:right;">Σ=2.902,75 €</div>
<div class="s" style="top:575px;color:#000000;right:158px;text-align:right;">Σ=364,01 €</div>
<div class="s" style="top:575px;color:#000000;right:12px;text-align:right;">Σ=3.266,76 €</div>
<div style="left:3px;top:603px;width:22px;height:1px;background:#e4ebf6;"></div>
<div style="left:25px;top:603px;width:1068px;height:1px;background:#c9d7ee;"></div>
<div style="left:26px;top:604px;width:1069px;height:18px;background:#e6ebf6;"></div>
<div style="left:35px;top:608px;width:7px;height:7px;border:1px solid #47484e;background:#e9eef8"></div>
<div style="left:37px;top:612px;width:5px;height:1px;background:#47484e;"></div>
<div class="b" style="top:603px;color:#000000;left:53px;font-weight:bold;">Rechnungsdatum (Rechnung): 31.08.2020</div>
<div style="left:3px;top:622px;width:22px;height:1px;background:#d6e1f1;"></div>
<div style="left:26px;top:622px;width:24px;height:1px;background:#e6ebf6;"></div>
<div style="left:50px;top:622px;width:1045px;height:1px;background:#c9d7ee;"></div>
<div style="left:26px;top:623px;width:24px;height:101px;background:#e6ebf6;"></div>
<div style="left:50px;top:623px;width:1px;height:101px;background:#c0d0e9;"></div>
<div style="left:51px;top:623px;width:1041px;height:20px;background:#eef2fa;"></div>
<div style="left:155px;top:623px;width:1px;height:20px;background:#c0d0e9;"></div>
<div style="left:305px;top:623px;width:1px;height:20px;background:#c0d0e9;"></div>
<div style="left:455px;top:623px;width:1px;height:20px;background:#c0d0e9;"></div>
<div style="left:641px;top:623px;width:1px;height:20px;background:#c0d0e9;"></div>
<div style="left:791px;top:623px;width:1px;height:20px;background:#c0d0e9;"></div>
<div style="left:941px;top:623px;width:1px;height:20px;background:#c0d0e9;"></div>
<div style="left:1092px;top:623px;width:1px;height:20px;background:#c0d0e9;"></div>
<div style="left:3px;top:643px;width:22px;height:1px;background:#d6e1f1;"></div>
<div style="left:50px;top:643px;width:1043px;height:1px;background:#c9d7ee;"></div>
<div class="t" style="top:623px;color:#1a82d2;left:54px;letter-spacing:-0.030px;">R0193</div>
<div class="d" style="top:623px;color:#000000;left:159px;">31.08.2020</div>
<div class="t" style="top:623px;color:#000000;left:310px;letter-spacing:-0.219px;">Anzahlungsschlussrechnung</div>
<div class="t" style="top:623px;color:#1a82d2;left:459px;letter-spacing:-0.199px;">Schulze AG (K10001 / L10021)</div>
<div class="n" style="top:623px;color:#000000;right:309px;text-align:right;">617,40 €</div>
<div class="n" style="top:623px;color:#000000;right:159px;text-align:right;">117,31 €</div>
<div class="n" style="top:623px;color:#000000;right:8px;text-align:right;">734,71 €</div>
<div style="left:51px;top:644px;width:1041px;height:20px;background:#fcfdff;"></div>
<div style="left:942px;top:644px;width:150px;height:20px;background:#c5e0a0;"></div>
<div style="left:155px;top:644px;width:1px;height:20px;background:#c0d0e9;"></div>
<div style="left:305px;top:644px;width:1px;height:20px;background:#c0d0e9;"></div>
<div style="left:455px;top:644px;width:1px;height:20px;background:#c0d0e9;"></div>
<div style="left:641px;top:644px;width:1px;height:20px;background:#c0d0e9;"></div>
<div style="left:791px;top:644px;width:1px;height:20px;background:#c0d0e9;"></div>
<div style="left:941px;top:644px;width:1px;height:20px;background:#c0d0e9;"></div>
<div style="left:1092px;top:644px;width:1px;height:20px;background:#c0d0e9;"></div>
<div style="left:3px;top:664px;width:22px;height:1px;background:#d6e1f1;"></div>
<div style="left:50px;top:664px;width:1043px;height:1px;background:#c9d7ee;"></div>
<div class="t" style="top:644px;color:#1a82d2;left:54px;letter-spacing:-0.030px;">R0194</div>
<div class="d" style="top:644px;color:#000000;left:159px;">31.08.2020</div>
<div class="t" style="top:644px;color:#000000;left:310px;letter-spacing:-0.151px;">Anzahlungsrechnung</div>
<div class="t" style="top:644px;color:#1a82d2;left:459px;letter-spacing:-0.199px;">Schulze AG (K10001 / L10021)</div>
<div class="n" style="top:644px;color:#000000;right:309px;text-align:right;">47.162,50 €</div>
<div class="n" style="top:644px;color:#000000;right:159px;text-align:right;">8.960,88 €</div>
<div class="n" style="top:644px;color:#000000;right:8px;text-align:right;">56.123,38 €</div>
<div style="left:51px;top:665px;width:1041px;height:20px;background:#eef2fa;"></div>
<div style="left:942px;top:665px;width:150px;height:20px;background:#c5e0a0;"></div>
<div style="left:155px;top:665px;width:1px;height:20px;background:#c0d0e9;"></div>
<div style="left:305px;top:665px;width:1px;height:20px;background:#c0d0e9;"></div>
<div style="left:455px;top:665px;width:1px;height:20px;background:#c0d0e9;"></div>
<div style="left:641px;top:665px;width:1px;height:20px;background:#c0d0e9;"></div>
<div style="left:791px;top:665px;width:1px;height:20px;background:#c0d0e9;"></div>
<div style="left:941px;top:665px;width:1px;height:20px;background:#c0d0e9;"></div>
<div style="left:1092px;top:665px;width:1px;height:20px;background:#c0d0e9;"></div>
<div style="left:3px;top:685px;width:22px;height:1px;background:#d6e1f1;"></div>
<div style="left:50px;top:685px;width:1043px;height:2px;background:#b6c8e4;"></div>
<div class="t" style="top:665px;color:#1a82d2;left:54px;letter-spacing:-0.030px;">R0195</div>
<div class="d" style="top:665px;color:#000000;left:159px;">31.08.2020</div>
<div class="t" style="top:665px;color:#000000;left:310px;letter-spacing:-0.219px;">Anzahlungsschlussrechnung</div>
<div class="t" style="top:665px;color:#1a82d2;left:459px;letter-spacing:-0.199px;">Schulze AG (K10001 / L10021)</div>
<div class="n" style="top:665px;color:#000000;right:309px;text-align:right;">141.487,50 €</div>
<div class="n" style="top:665px;color:#000000;right:159px;text-align:right;">26.882,63 €</div>
<div class="n" style="top:665px;color:#000000;right:8px;text-align:right;">168.370,13 €</div>
<div style="left:51px;top:687px;width:1044px;height:36px;background:#fcfdff;"></div>
<div style="left:643px;top:693px;width:148px;height:24px;background:#e5eaf5;"></div>
<div style="left:793px;top:693px;width:148px;height:24px;background:#e5eaf5;"></div>
<div style="left:943px;top:693px;width:144px;height:24px;background:#e5eaf5;"></div>
<div class="s" style="top:695px;color:#000000;right:308px;text-align:right;">Σ=189.267,40 €</div>
<div class="s" style="top:695px;color:#000000;right:158px;text-align:right;">Σ=35.960,82 €</div>
<div class="s" style="top:695px;color:#000000;right:12px;text-align:right;">Σ=225.228,22 €</div>
<div style="left:3px;top:723px;width:22px;height:1px;background:#e4ebf6;"></div>
<div style="left:25px;top:723px;width:1068px;height:1px;background:#c9d7ee;"></div>
<div style="left:3px;top:736px;width:1092px;height:1px;background:#9db7dc;"></div>
<div style="left:643px;top:743px;width:148px;height:24px;background:#e5eaf5;"></div>
<div style="left:793px;top:743px;width:148px;height:24px;background:#e5eaf5;"></div>
<div style="left:943px;top:743px;width:146px;height:24px;background:#e5eaf5;"></div>
<div class="tot" style="top:745px;color:#000000;right:308px;text-align:right;font-weight:bold;">Σ=212.093,67 €</div>
<div class="tot" style="top:745px;color:#000000;right:158px;text-align:right;font-weight:bold;">Σ=40.002,34 €</div>
<div class="tot" style="top:745px;color:#000000;right:11px;text-align:right;font-weight:bold;">Σ=252.096,01 €</div>
</body></html>
